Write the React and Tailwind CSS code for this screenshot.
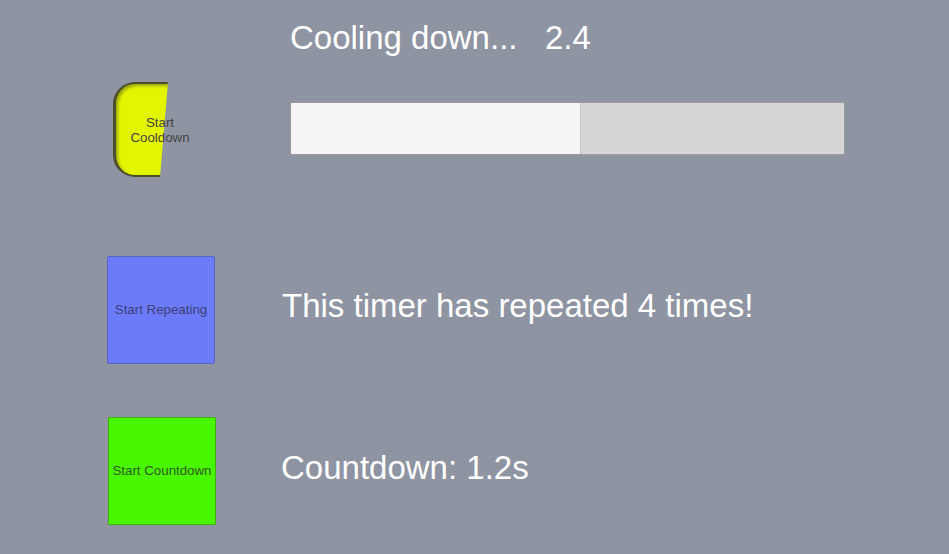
import React from 'react';

function App() {
  const progress = 0.525;

  return (
    <div className="w-[949px] h-[554px] bg-[#8f94a3] flex flex-col font-['Liberation_Sans',Arial,sans-serif] overflow-hidden">
      {/* cooldown header */}
      <div className="pl-[290px] pt-[21px] text-[33px] leading-none text-white whitespace-pre">
        Cooling down...   2.4
      </div>

      {/* cooldown row */}
      <div className="flex items-start mt-[28px]">
        <div className="relative ml-[113px] w-[94px] h-[95px] flex items-center justify-center">
          <div className="absolute inset-0 rounded-[22px] bg-[#e4f500] border-t-2 border-l-[3px] border-b-2 border-[#4c4e2c] shadow-[inset_2px_2px_3px_rgba(70,70,30,0.45)] [clip-path:polygon(0_0,55px_0,47px_100%,0_100%)]"></div>
          <span className="relative text-[13.3px] leading-[15px] text-[#444444] text-center">
            Start<br />Cooldown
          </span>
        </div>
        <div className="ml-[83px] mt-[20px] w-[555px] h-[53px] flex rounded-[2px] border border-[#9c9c9c] bg-[#d6d6d6] overflow-hidden">
          <div className="h-full bg-[#f5f5f5] border-r border-[#c4c4c4]" style={{ width: `${progress * 100}%` }}></div>
        </div>
      </div>

      {/* repeating row */}
      <div className="flex items-start mt-[79px]">
        <button className="ml-[107px] w-[108px] h-[108px] rounded-[2px] bg-[#6b7bfa] border border-[#5a64c0] text-[13.3px] text-[#3c3f73] flex items-center justify-center">
          Start Repeating
        </button>
        <div className="ml-[67px] mt-[33px] text-[33px] leading-none text-white">
          This timer has repeated 4 times!
        </div>
      </div>

      {/* countdown row */}
      <div className="flex items-start mt-[53px]">
        <button className="ml-[108px] w-[108px] h-[108px] rounded-[1px] bg-[#48f600] border border-[#40b010] text-[13.3px] text-[#2f5a20] flex items-center justify-center whitespace-nowrap">
          Start Countdown
        </button>
        <div className="ml-[65px] mt-[34px] text-[33px] leading-none text-white">
          Countdown: 1.2s
        </div>
      </div>
    </div>
  );
}

export default App;
